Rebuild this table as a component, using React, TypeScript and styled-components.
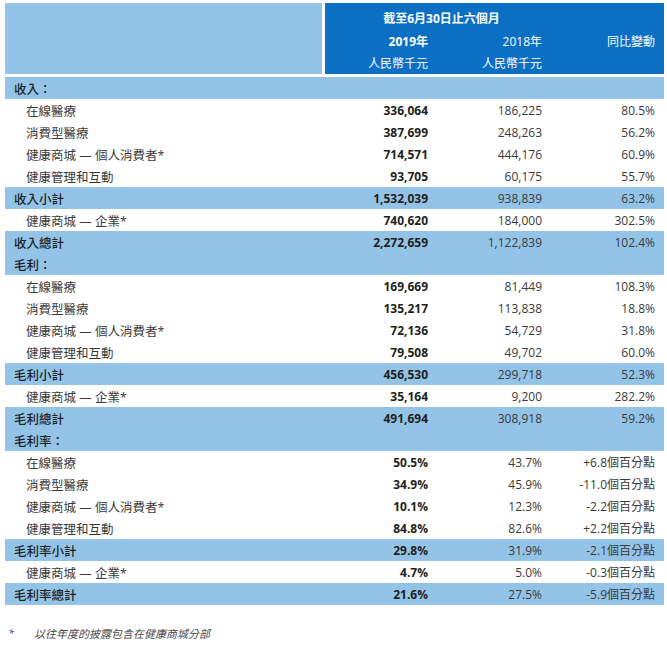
import React from "react";
import styled, { createGlobalStyle } from "styled-components";

const GlobalStyle = createGlobalStyle`
  body {
    margin: 0;
    background: #ffffff;
    font-family: "Open Sans", "Noto Sans CJK TC", sans-serif;
  }
`;

const LIGHT = "#93c4e8";
const DARK = "#0b6fc3";
const COLS = "319px 104px 114px 113px";

type Row = {
  label: string;
  a?: string;
  b?: string;
  c?: string;
  kind: "head" | "item" | "band";
};

const rows: Row[] = [
  { label: "收入：", kind: "head" },
  { label: "在線醫療", a: "336,064", b: "186,225", c: "80.5%", kind: "item" },
  { label: "消費型醫療", a: "387,699", b: "248,263", c: "56.2%", kind: "item" },
  { label: "健康商城 — 個人消費者*", a: "714,571", b: "444,176", c: "60.9%", kind: "item" },
  { label: "健康管理和互動", a: "93,705", b: "60,175", c: "55.7%", kind: "item" },
  { label: "收入小計", a: "1,532,039", b: "938,839", c: "63.2%", kind: "band" },
  { label: "健康商城 — 企業*", a: "740,620", b: "184,000", c: "302.5%", kind: "item" },
  { label: "收入總計", a: "2,272,659", b: "1,122,839", c: "102.4%", kind: "band" },
  { label: "毛利：", kind: "head" },
  { label: "在線醫療", a: "169,669", b: "81,449", c: "108.3%", kind: "item" },
  { label: "消費型醫療", a: "135,217", b: "113,838", c: "18.8%", kind: "item" },
  { label: "健康商城 — 個人消費者*", a: "72,136", b: "54,729", c: "31.8%", kind: "item" },
  { label: "健康管理和互動", a: "79,508", b: "49,702", c: "60.0%", kind: "item" },
  { label: "毛利小計", a: "456,530", b: "299,718", c: "52.3%", kind: "band" },
  { label: "健康商城 — 企業*", a: "35,164", b: "9,200", c: "282.2%", kind: "item" },
  { label: "毛利總計", a: "491,694", b: "308,918", c: "59.2%", kind: "band" },
  { label: "毛利率：", kind: "head" },
  { label: "在線醫療", a: "50.5%", b: "43.7%", c: "+6.8個百分點", kind: "item" },
  { label: "消費型醫療", a: "34.9%", b: "45.9%", c: "-11.0個百分點", kind: "item" },
  { label: "健康商城 — 個人消費者*", a: "10.1%", b: "12.3%", c: "-2.2個百分點", kind: "item" },
  { label: "健康管理和互動", a: "84.8%", b: "82.6%", c: "+2.2個百分點", kind: "item" },
  { label: "毛利率小計", a: "29.8%", b: "31.9%", c: "-2.1個百分點", kind: "band" },
  { label: "健康商城 — 企業*", a: "4.7%", b: "5.0%", c: "-0.3個百分點", kind: "item" },
  { label: "毛利率總計", a: "21.6%", b: "27.5%", c: "-5.9個百分點", kind: "band" },
];

const Page = styled.div`
  padding: 3px 3px 0 5px;
  width: 659px;
  color: #3a3a3a;
`;

const Header = styled.div`
  display: grid;
  grid-template-columns: 317px 1fr;
  gap: 3px;
  height: 71px;
`;

const HeaderBlank = styled.div`
  background: ${LIGHT};
`;

const HeaderBlue = styled.div`
  background: ${DARK};
  color: #ffffff;
  display: grid;
  grid-template-columns: 103px 114px 113px;
  grid-template-rows: 24px 22px 21px;
  padding-top: 3px;
  font-size: 12px;
  align-items: center;
`;

const Period = styled.div`
  grid-column: 1 / span 2;
  text-align: center;
  font-weight: 700;
  padding-left: 16px;
`;

const HeadCell = styled.div<{ $bold?: boolean }>`
  text-align: right;
  font-weight: ${(p) => (p.$bold ? 700 : 400)};
`;

const Table = styled.div`
  margin-top: 3px;
`;

const RowLine = styled.div<{ $fill: boolean }>`
  display: grid;
  grid-template-columns: ${COLS};
  height: 22px;
  align-items: center;
  background: ${(p) => (p.$fill ? LIGHT : "transparent")};
  font-size: 12px;
`;

const Label = styled.div<{ $indent: boolean }>`
  padding-left: ${(p) => (p.$indent ? "21px" : "9px")};
  font-size: 12.5px;
  font-weight: ${(p) => (p.$indent ? 400 : 500)};
  color: ${(p) => (p.$indent ? "#3a3a3a" : "#1f1f1f")};
  white-space: nowrap;
`;

const Num = styled.div<{ $bold?: boolean }>`
  text-align: right;
  font-weight: ${(p) => (p.$bold ? 700 : 400)};
  color: ${(p) => (p.$bold ? "#231f20" : "#3a3a3a")};
  white-space: nowrap;
`;

const Note = styled.div`
  display: flex;
  gap: 20px;
  margin-top: 20px;
  padding-left: 3px;
  font-size: 11px;
  font-style: italic;
  color: #4a4a4a;
`;

export default function App() {
  return (
    <>
      <GlobalStyle />
      <Page>
        <Header>
          <HeaderBlank />
          <HeaderBlue>
            <Period>截至6月30日止六個月</Period>
            <div />
            <HeadCell $bold>2019年</HeadCell>
            <HeadCell>2018年</HeadCell>
            <HeadCell>同比變動</HeadCell>
            <HeadCell>人民幣千元</HeadCell>
            <HeadCell>人民幣千元</HeadCell>
            <div />
          </HeaderBlue>
        </Header>
        <Table>
          {rows.map((r, i) => (
            <RowLine key={i} $fill={r.kind !== "item"}>
              <Label $indent={r.kind === "item"}>{r.label}</Label>
              <Num $bold>{r.a}</Num>
              <Num>{r.b}</Num>
              <Num>{r.c}</Num>
            </RowLine>
          ))}
        </Table>
        <Note>
          <span>*</span>
          <span>以往年度的披露包含在健康商城分部</span>
        </Note>
      </Page>
    </>
  );
}
